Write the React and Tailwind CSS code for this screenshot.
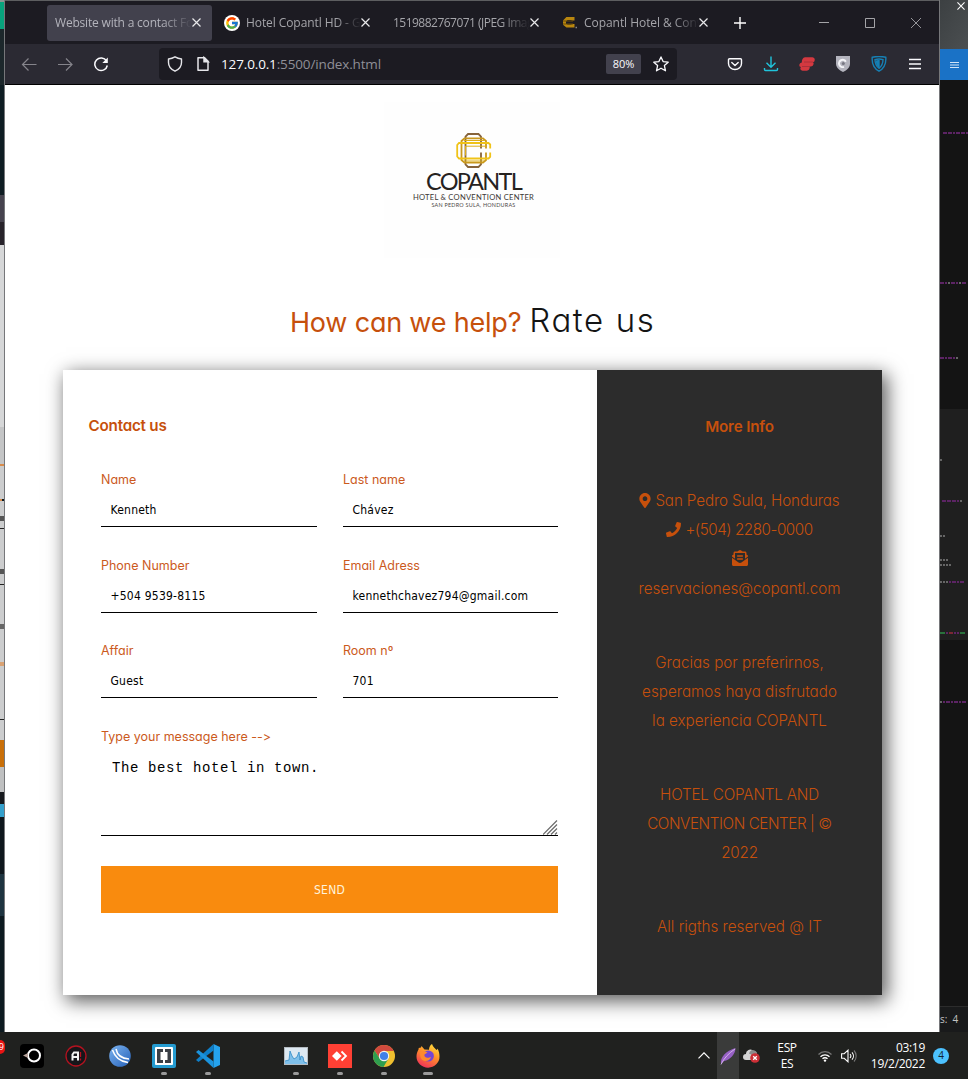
import React from "react";
import { FaMapMarkerAlt, FaPhone, FaEnvelopeOpenText } from "react-icons/fa";
import { FcGoogle } from "react-icons/fc";

const QUICK = "font-[Inter,sans-serif] [font-feature-settings:'cv11','calt'_0]";

function Close({ className = "size-[9px] text-[#e8e8ea]" }) {
  return (
    <svg viewBox="0 0 9 9" className={className} fill="none" stroke="currentColor" strokeWidth="1.2">
      <path d="M.5 .5l8 8M8.500 .5l-8 8" />
    </svg>
  );
}

function CopantlMark({ className }) {
  return (
    <svg viewBox="0 0 36 36" className={className} fill="none" strokeWidth="1.8">
      <path d="M25 15.500V3.500L22.500 1H12L9.500 3.500v28L12 34h10.500l2.500-2.500V19.500" stroke="#86633a" />
      <path d="M30 15.500V8l-3-2.700H8.500L5.500 8v19l3 2.700H27l3-2.700v-7.500" stroke="#c9981c" />
      <path d="M34.200 15.500v-4L32.500 10H3L1.200 12v11.500L3 25.500h29.500l1.700-1.700v-4.300" stroke="#f0c318" />
      <path d="M9.500 13.200h20M9.500 13v9.500M8 28h20M8 7.500h20" stroke="#dcae1b" strokeWidth="1" />
    </svg>
  );
}

function Tab({ icon, title, active, tracking }) {
  return (
    <div className={`flex h-9 w-[165px] shrink-0 items-center rounded-[3px] pl-2 pr-[11px] ${active ? "bg-[#42414d]" : ""}`}>
      {icon && <span className="mr-[6px] flex size-4 items-center justify-center">{icon}</span>}
      <span
        className={`flex-1 overflow-hidden whitespace-nowrap font-['Open_Sans',sans-serif] text-[12px] ${tracking} [mask-image:linear-gradient(to_right,#000_78%,transparent_100%)] ${active ? "text-[#b4b4bc]" : "text-[#a5a5aa]"}`}
      >
        {title}
      </span>
      <Close />
    </div>
  );
}

function TabStrip() {
  return (
    <div className="flex h-11 items-center border-t border-[#5d5e60] bg-[#1c1b22] pl-[42px]">
      <div className="flex gap-1">
        <Tab active title="Website with a contact Form" tracking="tracking-[-0.19px]" />
        <Tab icon={<span className="rounded-full bg-white p-[1px]"><FcGoogle className="size-[14px]" /></span>} title="Hotel Copantl HD - Google" tracking="tracking-[-0.08px]" />
        <Tab title="1519882767071 (JPEG Image, 960" tracking="tracking-[-0.52px]" />
        <Tab
          icon={
            <svg viewBox="0 0 16 16" className="size-4" fill="none" stroke="#b8860f" strokeWidth="3">
              <path d="M11 5.500V3.500H5L2.500 6v3L5 11h6V9" />
              <path d="M13.500 12.500h1.500" stroke="#888" strokeWidth="1.500" />
              <path d="M1 6h10M1 9h10" stroke="#6b4d08" strokeWidth="1" />
            </svg>
          }
          title="Copantl Hotel & Convention"
          tracking="tracking-[-0.05px]"
        />
      </div>
      <svg viewBox="0 0 12 12" className="ml-[15px] size-3 text-white" stroke="currentColor" strokeWidth="1.400">
        <path d="M6 0v12M0 6h12" />
      </svg>
      <div className="ml-auto flex items-center gap-9 pr-[18px] text-[#a4a4a8]">
        <svg viewBox="0 0 10 10" className="size-[10px]" stroke="currentColor"><path d="M0 4.500h10" /></svg>
        <svg viewBox="0 0 10 10" className="size-[10px]" fill="none" stroke="currentColor"><path d="M.5 .5h9v9h-9z" /></svg>
        <svg viewBox="0 0 10 10" className="size-[10px]" fill="none" stroke="currentColor" strokeWidth=".9"><path d="M0 0l10 10M10 0L0 10" /></svg>
      </div>
    </div>
  );
}

function NavBar() {
  return (
    <div className="flex h-[41px] items-center border-b border-black bg-[#2b2a33] pl-4">
      <div className="flex w-[138px] items-center gap-5">
        <svg viewBox="0 0 16 16" className="size-4 text-[#85848b]" fill="none" stroke="currentColor" strokeWidth="1.200"><path d="M7.500 2.500L1.500 8.500l6 6M1.500 8.500h14" /></svg>
        <svg viewBox="0 0 16 16" className="size-4 text-[#85848b]" fill="none" stroke="currentColor" strokeWidth="1.200"><path d="M9 2.500l6 6-6 6M15 8.500H1" /></svg>
        <svg viewBox="0 0 16 16" className="size-4 text-[#fbfbfe]" fill="none" stroke="currentColor" strokeWidth="1.500">
          <path d="M13.500 5A6.300 6.300 0 1 0 14.300 9.500" />
          <path d="M14.800 1.500V7H9.300z" fill="currentColor" stroke="none" />
        </svg>
      </div>
      <div className="flex h-8 w-[518px] items-center rounded bg-[#1c1b22] pl-2 pr-2">
        <svg viewBox="0 0 16 16" className="size-4 text-[#e6e6ea]" fill="none" stroke="currentColor" strokeWidth="1.400"><path d="M8 .8C6 2 4 2.700 1.500 3v3.500C1.500 10.500 4 13.500 8 15.200c4-1.700 6.500-4.700 6.500-8.700V3C12 2.700 10 2 8 .8z" strokeLinejoin="round" /></svg>
        <svg viewBox="0 0 14 16" className="ml-[13px] h-4 w-[14px] text-[#e6e6ea]" fill="none" stroke="currentColor" strokeWidth="1.500"><path d="M2 1.800h6.500L12 5.300v8.900H2z" strokeLinejoin="round" /><path d="M8 1.500v4.300h4.300z" fill="currentColor" /></svg>
        <span className="ml-[11px] mt-[1px] font-['Open_Sans',sans-serif] text-[13.500px] tracking-[-0.14px] text-[#8f8f97]">
          <span className="text-[#fbfbfe]">127.0.0.1</span>:5500/index.html
        </span>
        <span className="ml-auto flex h-5 w-[35px] items-center justify-center rounded-[2px] bg-[#42414d] font-['Open_Sans',sans-serif] text-[11px] text-[#fbfbfe]">80%</span>
        <svg viewBox="0 0 16 16" className="ml-3 size-4 text-[#fbfbfe]" fill="none" stroke="currentColor" strokeWidth="1.300" strokeLinejoin="round"><path d="M8 .9l2.100 4.700 5.100.6-3.800 3.400 1.100 5.200L8 12.200l-4.500 2.600 1.100-5.200L.8 6.200l5.100-.6z" /></svg>
      </div>
      <div className="ml-auto flex items-center gap-5 pr-4">
        <svg viewBox="0 0 16 16" className="size-4 text-[#fbfbfe]" fill="none" stroke="currentColor" strokeWidth="1.400" strokeLinejoin="round"><path d="M2.500 2.700h11q1 0 1 1V7.500a6.500 6 0 0 1-13 0V3.700q0-1 1-1z" /><path d="M4.800 6.500L8 9.500l3.200-3" strokeLinecap="round" /></svg>
        <svg viewBox="0 0 16 16" className="size-4 text-[#20c4dc]" fill="none" stroke="currentColor" strokeWidth="1.400"><path d="M8 .5v10.500M3.500 6.800L8 11.300l4.500-4.500M1.500 12v1.500q0 1 1 1h11q1 0 1-1V12" /></svg>
        <svg viewBox="0 0 16 16" className="size-4" fill="#d43940"><path d="M6 1.300h7.500q2.300.3 2.300 2.500T14 6.200q.8.500.6 1.800-.4 2.200-2.600 2.500h-1.200q0 3.800-3 4.200H3.500Q1.300 14.500 1.300 12.800q0-1 .7-1.800Q.2 10.800.2 9 .7 6.600 2.800 6.500 2.700 2 6 1.300z" /><path d="M5 6h9M3 10.500h8" stroke="#a02f38" strokeWidth=".8" /></svg>
        <svg viewBox="0 0 16 16" className="size-4"><path d="M1 0h14v7.500c0 4-3 6.500-7 8.500-4-2-7-4.500-7-8.500z" fill="#b4b4be" /><path d="M10.800 5.800A3.600 3.600 0 1 0 9 10.800" fill="none" stroke="#f4f4f8" strokeWidth="2" /><circle cx="8.300" cy="7.500" r="1.500" fill="#777782" /></svg>
        <svg viewBox="0 0 16 16" className="size-4" fill="none" stroke="#1680b5" strokeWidth="1.400"><path d="M1.200 1.300Q8-.4 14.800 1.300 15.500 11 8 15.200.5 11 1.200 1.300z" /><path d="M4 3.600Q8 2.500 12 3.600 12 9.500 8 12.300 4 9.500 4 3.600z" /><path d="M8 4.500v6.500C6 9 5.500 7 5.500 5z" fill="#1680b5" /></svg>
        <svg viewBox="0 0 16 16" className="size-4 text-[#fbfbfe]" stroke="currentColor" strokeWidth="1.300"><path d="M2 3.500h12M2 8h12M2 12.500h12" /></svg>
      </div>
    </div>
  );
}

function Field({ label, value }) {
  return (
    <div className="flex h-[57px] flex-col">
      <label className={`h-5 text-[12.500px] leading-5 text-[#cb5a1d] ${QUICK}`}>{label}</label>
      <div className="flex h-[37px] items-center border-b border-black pl-[9.500px] pt-[3px] font-['DejaVu_Sans_Condensed','DejaVu_Sans',sans-serif] text-[12px] tracking-[0.230px] text-black">
        {value}
      </div>
    </div>
  );
}

function ContactForm() {
  return (
    <form className="w-[534px] bg-white pt-[43px] pl-[25px] pr-[39px]">
      <h3 className={`h-6 pl-[.5px] text-[15.200px] font-semibold leading-[25px] text-[#c6500c] ${QUICK} tracking-[-0.2px]`}>Contact us</h3>
      <div className="pl-[13px] pt-[33px]">
        <div className="grid grid-cols-[216px_215px] grid-rows-[86px_85px_86px] gap-x-[26px]">
          <Field label="Name" value="Kenneth" />
          <Field label="Last name" value="Chávez" />
          <Field label="Phone Number" value="+504 9539-8115" />
          <Field label="Email Adress" value="kennethchavez794@gmail.com" />
          <Field label="Affair" value="Guest" />
          <Field label="Room nº" value="701" />
        </div>
        <label className={`block h-5 text-[12.500px] leading-5 text-[#cb5a1d] ${QUICK}`}>Type your message here --&gt;</label>
        <div className="flex h-[89px] justify-between border-b border-black pl-[11px] pt-[11px]">
          <span className="font-['Liberation_Mono',monospace] text-[14px] leading-5 tracking-[0.600px] text-black">The best hotel in town.</span>
          <svg viewBox="0 0 15 15" className="size-[15px] self-end" stroke="#6b6b6b" strokeWidth="1.200"><path d="M0 14.500L14 .5M4 14.500L14 4.500M8 14.500l6-6M12 14.500l2-2" /></svg>
        </div>
        <button type="button" className="mt-[30px] h-[47px] w-full bg-[#f98b0e] font-['DejaVu_Sans_Condensed','DejaVu_Sans',sans-serif] text-[12px] tracking-[0.200px] text-[#fff3dc]">SEND</button>
      </div>
    </form>
  );
}

function InfoPanel() {
  return (
    <aside className={`w-[285px] bg-[#2c2c2c] pt-[45px] text-center text-[#c6500c] ${QUICK}`}>
      <h3 className="h-6 text-[15.200px] font-semibold leading-6 tracking-[-0.15px]">More Info</h3>
      <div className="mt-[47px] flex flex-col gap-[44.500px] text-[15.200px] font-light leading-[29.250px]">
        <div>
          <p className="flex items-center justify-center gap-1 tracking-[-0.12px]"><FaMapMarkerAlt className="h-[15px] w-[12px]" />San Pedro Sula, Honduras</p>
          <p className="flex items-center justify-center gap-1 tracking-[-0.45px]"><FaPhone className="size-[15px]" />+(504) 2280-0000</p>
          <p className="flex h-[29.250px] items-center justify-center pb-[2px]"><FaEnvelopeOpenText className="size-4" /></p>
          <p className="tracking-[-0.04px]">reservaciones@copantl.com</p>
        </div>
        <p>Gracias por preferirnos,<br />esperamos haya disfrutado<br />la experiencia COPANTL</p>
        <p className="tracking-[-0.17px]">HOTEL COPANTL AND<br /><span className="tracking-[-0.4px]">CONVENTION CENTER | ©</span><br />2022</p>
        <p>All rigths reserved @ IT</p>
      </div>
    </aside>
  );
}

function Page() {
  return (
    <main className="flex flex-1 flex-col bg-white">
      <div className="ml-[379px] mt-[17px] flex h-[156px] w-[176px] flex-col items-center bg-[#fefefe] pt-[31px] pl-[3px] font-[Lato,sans-serif] whitespace-nowrap">
        <CopantlMark className="size-[36px]" />
        <span className="h-6 text-[23.500px] leading-[24px] tracking-[-1.700px] text-[#26221f]">COPANTL</span>
        <span className="h-2 text-[7.600px] leading-[8px] tracking-[0.250px] text-[#3c3835]">HOTEL &amp; CONVENTION CENTER</span>
        <span className="h-2 text-[5.400px] leading-[8px] tracking-[0.250px] text-[#4c4845]">SAN PEDRO SULA, HONDURAS</span>
      </div>
      <h1 className={`ml-[285px] mt-[38px] flex h-[48px] items-baseline whitespace-nowrap ${QUICK}`}>
        <span className="text-[27px] text-[#c6500c] tracking-[-0.2px]">How can we help?</span>
        <span className="ml-[8px] text-[33px] font-light leading-[48px] tracking-[1.600px] text-[#141414]">Rate us</span>
      </h1>
      <section className="ml-[58px] mt-[26px] flex h-[625px] w-[819px] shadow-[4px_5px_18px_1px_rgba(0,0,0,0.65)]">
        <ContactForm />
        <InfoPanel />
      </section>
    </main>
  );
}

function LeftEdge() {
  return (
    <div className="flex w-1 shrink-0 flex-col overflow-hidden bg-[#0d1a20]">
      <i className="h-[2px] bg-[#8a9491]" />
      <i className="h-[27px] bg-[#07a27c]" />
      <i className="h-[56px] bg-[#1c272b]" />
      <i className="h-[110px] bg-[#0f1d23]" />
      <i className="h-[27px] bg-[#46434e]" />
      <i className="h-[23px] bg-[#27232a]" />
      <i className="h-[182px] bg-[#d6d7d8]" />
      <i className="h-[37px] bg-[#c4c5c6]" />
      <i className="h-[2px] bg-[#d88c4c]" />
      <i className="h-[33px] bg-[#cccdce]" />
      <i className="h-[2px] w-[2px] bg-[#d88c4c]" />
      <i className="h-[15px] bg-[#cccdce]" />
      <i className="h-[5px] bg-[#555]" />
      <i className="h-[7px] bg-[#cccdce]" />
      <i className="h-[1px] bg-[#222]" />
      <i className="h-[40px] bg-[#cccdce]" />
      <i className="h-[5px] bg-[#555]" />
      <i className="h-[10px] bg-[#cccdce]" />
      <i className="h-[1px] bg-[#222]" />
      <i className="h-[39px] bg-[#cccdce]" />
      <i className="h-[5px] bg-[#666]" />
      <i className="h-[33px] bg-[#cccdce]" />
      <i className="h-[4px] bg-[#d9a273]" />
      <i className="h-[53px] bg-[#cccdce]" />
      <i className="h-[1px] bg-[#222]" />
      <i className="h-[20px] bg-[#cccdce]" />
      <i className="h-[27px] bg-[#c96f08]" />
      <i className="h-[25px] bg-[#bfc0c1]" />
      <i className="h-[12px] bg-[#16191d]" />
      <i className="h-[13px] bg-[#34a0cc]" />
      <i className="h-[57px] bg-[#0f171d]" />
      <i className="h-[42px] bg-[#1e3440]" />
    </div>
  );
}

function CodeMarks({ gap, dots }) {
  return (
    <div className={`flex h-[2px] gap-[1px] ${gap}`}>
      {dots.map((d, i) => (
        <i key={i} className={`h-[2px] ${d}`} />
      ))}
    </div>
  );
}

const M = "w-[4px] bg-[#5c2464]";
const N = "w-[2px] bg-[#5c2464]";
const W = "w-[2px] bg-[#666]";

function RightEdge() {
  return (
    <div className="flex w-7 shrink-0 flex-col overflow-hidden bg-[#141414]">
      <div className="flex h-[49px] justify-end bg-gradient-to-br from-[#3c4042] to-[#4b4f51] pt-[2px] pr-[3px]">
        <Close className="size-2 text-white" />
      </div>
      <div className="flex h-[31px] items-center justify-center bg-[#1a72c6]">
        <svg viewBox="0 0 9 6" className="h-[6px] w-[9px]" stroke="#cfe3f7"><path d="M0 .5h9M0 3h9M0 5.500h9" /></svg>
      </div>
      <CodeMarks gap="mt-[52px] pl-[3px]" dots={[M, M, N, M, M, N]} />
      <CodeMarks gap="mt-[148px]" dots={[M, N, W, M, N, W, M]} />
      <CodeMarks gap="mt-[73px]" dots={[M, N, M, N, W]} />
      <div className="mt-[50px] flex h-[231px] shrink-0 flex-col bg-[#1f1f1f]">
        <CodeMarks gap="mt-[50px]" dots={[W]} />
        <CodeMarks gap="mt-[39px] pl-[2px]" dots={[M, M, M, N, W]} />
        <CodeMarks gap="mt-[33px]" dots={[W, W]} />
        <CodeMarks gap="mt-[22px]" dots={[W, W, W]} />
        <CodeMarks gap="mt-[3px]" dots={[W, W, W, W]} />
        <CodeMarks gap="mt-[15px]" dots={[W, W, W, N, M, N, M]} />
        <CodeMarks gap="mt-[49px]" dots={["w-[5px] bg-[#29713c]", N, "w-[4px] bg-[#7a2733]", N, N, "w-[5px] bg-[#29713c]"]} />
      </div>
      <CodeMarks gap="mt-[61px]" dots={[W, N, M, N, M, N, M]} />
      <div className="mt-auto flex h-[26px] items-center gap-[5px] border-t border-[#2c2c2c] bg-[#191a1b] font-['Open_Sans',sans-serif] text-[10px] text-[#c3c3c3]">
        <span>s:</span>
        <span>4</span>
      </div>
    </div>
  );
}

function TaskIcon({ running, wide, children }) {
  return (
    <div className="flex w-11 flex-col items-center pt-3">
      <svg viewBox="0 0 24 24" className="size-6">{children}</svg>
      {running && <i className={`mt-[4px] h-[3px] rounded-full bg-[#9a9a9a] ${wide ? "w-[10px]" : "w-[6px]"}`} />}
    </div>
  );
}

function TaskBar() {
  return (
    <footer className="flex h-[47px] shrink-0 overflow-hidden bg-[#20211f] font-['Open_Sans',sans-serif] text-white">
      <div className="flex w-[10px] items-start pt-[8px]">
        <span className="flex h-[14px] w-[5px] items-center justify-end rounded-r-full bg-[#e81414] pr-[1px] text-[9px]">9</span>
      </div>
      <div className="flex">
        <TaskIcon>
          <rect width="24" height="24" rx="4" fill="#000" />
          <circle cx="14" cy="11.500" r="6" fill="none" stroke="#fff" strokeWidth="2" />
          <path d="M8 9L3 11.500l5 2.500z" fill="#b9a49c" />
        </TaskIcon>
        <TaskIcon>
          <circle cx="12" cy="12" r="10" fill="#16161a" stroke="#b3121f" strokeWidth="1.300" />
          <path d="M8.500 16.500v-6L10 8.500h4v8M8.500 13h5.500" fill="none" stroke="#f3f3f3" strokeWidth="2" />
          <path d="M16.500 8v8.500" stroke="#b3121f" strokeWidth="1.300" strokeDasharray="5 1.500" />
        </TaskIcon>
        <TaskIcon>
          <defs><linearGradient id="kr" x1="0" y1="0" x2="1" y2="1"><stop stopColor="#7db4f0" /><stop offset="1" stopColor="#2460b8" /></linearGradient></defs>
          <circle cx="12" cy="12" r="10.800" fill="url(#kr)" />
          <path d="M4.500 6c2 6 7 11.500 15.500 12.500M8 5c1 5.500 5 9.500 13 10" fill="none" stroke="#fff" strokeWidth="1.500" />
        </TaskIcon>
        <TaskIcon running>
          <rect width="24" height="24" rx="2" fill="#249bd0" />
          <rect x="3" y="3" width="18" height="18" rx="1" fill="#fff" />
          <path d="M5 5h6v3H8.500v8h2.500v3H5zM19 5h-6v3h2.500v8H13v3h6z" fill="#3b3f45" />
        </TaskIcon>
        <TaskIcon running>
          <path d="M17.500 0L24 3v18l-6.500 3z" fill="#25a3ee" />
          <path d="M17.500 0v6.500L2.500 18 0 16z" fill="#0e7fc9" />
          <path d="M17.500 24v-6.500L2.500 6 0 8z" fill="#1b93dd" />
        </TaskIcon>
        <div className="w-11" />
        <TaskIcon running>
          <rect y="3" width="24" height="18" fill="#b5bcc2" />
          <rect x="1" y="4" width="22" height="16" fill="#dde9f2" />
          <path d="M1 20v-3l4-1 1-9 2 5 2 3 3-2 2-5 1 8 1-4 2 1 1 5 3 1v1z" fill="#7fc0ea" />
          <path d="M1 17l4-1 1-9 2 5 2 3 3-2 2-5 1 8 1-4 2 1 1 5 3 1" fill="none" stroke="#2f8ac6" strokeWidth=".8" />
        </TaskIcon>
        <TaskIcon running>
          <rect width="24" height="24" fill="#ff4034" />
          <path d="M8.800 7.200l4.800 4.800-4.800 4.800L4 12z" fill="#fff" />
          <path d="M13.500 7.500L18 12l-4.500 4.500" fill="none" stroke="#fff" strokeWidth="1.800" />
        </TaskIcon>
        <TaskIcon running>
          <circle cx="12" cy="12" r="11" fill="#f0c02f" />
          <path d="M12 7h9.800A11 11 0 0 0 2.500 6.500L7.700 14.500z" fill="#d04a3e" />
          <path d="M2.500 6.500A11 11 0 0 0 11.500 23l5-8.500H7.700z" fill="#2f9e4f" />
          <circle cx="12" cy="12" r="5.200" fill="#f1f1f1" />
          <circle cx="12" cy="12" r="4.100" fill="#3f80e8" />
        </TaskIcon>
        <TaskIcon running wide>
          <defs><linearGradient id="ff" x1=".8" y1="0" x2=".3" y2="1"><stop stopColor="#ffe23d" /><stop offset=".45" stopColor="#ff9028" /><stop offset="1" stopColor="#f0305a" /></linearGradient></defs>
          <path d="M16 0c1 3 3 4 4.500 6 1-.5 1-1.500 1-1.500 1.500 3 2 5 2 8a11.500 11 0 0 1-23 .3c0-3 .7-5 2-7.300L2.700 4 5 3.500 5.500 2l3 3.500L13 5.700C13 3.500 14 1 16 0z" fill="url(#ff)" />
          <circle cx="12.300" cy="12" r="5.600" fill="#7545d2" />
          <path d="M4 8.500c2-2 5-1.500 7.500 0L8.500 10.500c-.5 1.500.5 3 2.500 3.200 2 .2 3-.7 4-.5-1 2.500-3.500 4.500-7 3.500S4 12 4 8.500z" fill="#ff8a2c" />
        </TaskIcon>
      </div>
      <div className="ml-auto flex items-center">
        <svg viewBox="0 0 12 7" className="mr-[7px] h-[7px] w-3" fill="none" stroke="#fff" strokeWidth="1.200"><path d="M.5 6.300L6 .8l5.500 5.500" /></svg>
        <div className="flex h-full w-[22px] items-center justify-center bg-[#3a3b3a]">
          <svg viewBox="0 0 16 18" className="h-[18px] w-4"><path d="M1 17C0 10 6 4 15.500 1 15.500 7 10 13 4 14z" fill="#9660c4" /><path d="M1 17.500C4 11 9 6 15 2" stroke="#e2c8f5" fill="none" strokeWidth=".8" /></svg>
        </div>
        <svg viewBox="0 0 17 14" className="ml-[4px] h-[14px] w-[17px]"><path d="M3 11a3 3 0 0 1 0-6 4 4 0 0 1 7-3 4 4 0 0 1 4 4v5z" fill="#d5d5d5" /><path d="M7 2.500a4 4 0 0 1 7 3l-2 2-6-3z" fill="#8b8b8b" /><circle cx="12" cy="9" r="4.800" fill="#cc2f36" /><path d="M10.200 7.200l3.600 3.600M13.800 7.200l-3.600 3.600" stroke="#fff" strokeWidth="1.300" /></svg>
        <div className="ml-[15px] flex w-[24px] flex-col pt-[1px] text-center text-[12px] leading-4 tracking-[-0.4px]"><span>ESP</span><span>ES</span></div>
        <svg viewBox="0 0 14 12" className="ml-[19px] h-3 w-[14px]" fill="none" stroke="#fff" strokeWidth="1.300"><path d="M.5 4.500a9 9 0 0 1 13 0" stroke="#777" /><path d="M2.500 6.700a6.300 6.300 0 0 1 9 0M4.500 8.800a3.500 3.500 0 0 1 5 0" /><circle cx="7" cy="10.600" r="1.200" fill="#fff" stroke="none" /></svg>
        <svg viewBox="0 0 16 14" className="ml-[9px] h-[14px] w-4" fill="none" stroke="#fff" strokeWidth="1.100"><path d="M.6 4.700h2.600L7 1.200v11.600L3.200 9.300H.6zM9 5a3 3 0 0 1 0 4M11 3.300a5.500 5.500 0 0 1 0 7.400" /><path d="M13 1.500a8 8 0 0 1 0 11" stroke="#777" /></svg>
        <div className="ml-[10px] flex w-[58px] flex-col whitespace-nowrap pt-[1px] text-right text-[12px] leading-4 tracking-[-0.300px]"><span>03:19</span><span>19/2/2022</span></div>
        <span className="ml-[8px] mr-[19px] flex size-4 items-center justify-center rounded-full bg-[#4cc2ff] text-[10px] text-[#123]">4</span>
      </div>
    </footer>
  );
}

export default function App() {
  return (
    <div className="flex h-[1079px] w-[968px] flex-col overflow-hidden bg-black">
      <div className="flex h-[1032px]">
        <LeftEdge />
        <div className="flex w-[936px] shrink-0 flex-col overflow-hidden border-x border-[#76777a]">
          <TabStrip />
          <NavBar />
          <Page />
        </div>
        <RightEdge />
      </div>
      <TaskBar />
    </div>
  );
}
